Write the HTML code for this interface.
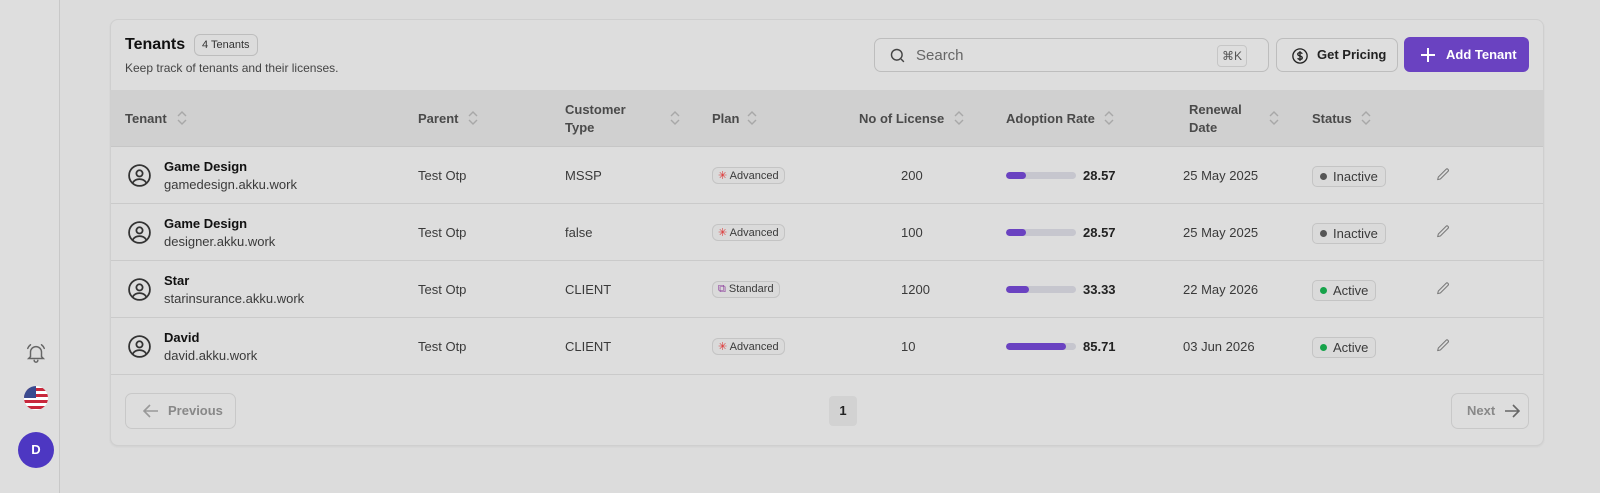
<!DOCTYPE html>
<html><head><meta charset="utf-8"><style>
*{box-sizing:border-box;margin:0;padding:0}
body{width:1600px;height:493px;background:#dcdcdc;font-family:"Liberation Sans",sans-serif;position:relative;overflow:hidden;color:#1f1f1f}
.a{position:absolute}
.side{left:0;top:0;width:60px;height:493px;border-right:1px solid #c8c8c8;background:#dedede}
.card{left:110px;top:19px;width:1434px;height:427px;border:1px solid #cfcfcf;border-radius:8px;background:#dddddd;overflow:hidden;box-shadow:0 1px 2px rgba(0,0,0,.06)}
.th{top:70px;left:0;width:1434px;height:57px;background:#d0d0d0;border-bottom:1px solid #c6c6c6}
.hl{font-size:13px;font-weight:bold;color:#4a4a4a;line-height:18px}
.row{left:0;width:1434px;height:57px;border-bottom:1px solid #cacaca}
.t{font-size:13px;color:#3a3a3a}
.pill{border:1px solid #c4c4c4;border-radius:6px;font-size:11px;color:#3a3a3a;padding:1px 5px;background:#dadada}
.bar{width:70px;height:7px;border-radius:4px;background:#c6c6ce;overflow:hidden}
.bar i{display:block;height:7px;background:#6a42c1;border-radius:4px}
.st{border:1px solid #c4c4c4;border-radius:5px;font-size:13px;color:#3a3a3a;padding:2px 7px;background:#dadada}
.dot{display:inline-block;width:7px;height:7px;border-radius:50%;margin-right:6px;vertical-align:1px}
.so{position:absolute;width:10px;height:16px}
</style></head><body>
<svg width="0" height="0" style="position:absolute"><defs><symbol id="s" viewBox="0 0 10 16"><path d="M1 6l4-4 4 4M1 10l4 4 4-4" fill="none" stroke="#a8a8a8" stroke-width="1.4"/></symbol><symbol id="p" viewBox="0 0 24 24"><path d="M16.5 3.5a2.1 2.1 0 013 3L8 18l-4 1 1-4z" fill="none" stroke="#7a7a7a" stroke-width="1.6" stroke-linejoin="round"/></symbol><symbol id="u" viewBox="0 0 24 24"><g fill="none" stroke="#333" stroke-width="1.7"><circle cx="12" cy="12" r="10"/><circle cx="12" cy="10" r="3"/><path d="M5.5 19c1.5-2.5 3.8-3.5 6.5-3.5s5 1 6.5 3.5"/></g></symbol></defs></svg>
<div class="a side">
<svg class="a" style="left:25px;top:342px" width="22" height="22" viewBox="0 0 24 24" fill="none" stroke="#666" stroke-width="1.6" stroke-linecap="round"><path d="M6 16V11a6 6 0 0112 0v5l2 2H4z"/><path d="M10 20a2 2 0 004 0"/><path d="M3 7a9 9 0 013-4M21 7a9 9 0 00-3-4"/></svg>
<svg class="a" style="left:24px;top:386px" width="24" height="24" viewBox="0 0 24 24"><defs><clipPath id="c"><circle cx="12" cy="12" r="12"/></clipPath></defs><g clip-path="url(#c)"><rect width="24" height="24" fill="#fff"/><rect y="2" width="24" height="3" fill="#c8283c"/><rect y="8" width="24" height="3" fill="#c8283c"/><rect y="14" width="24" height="3" fill="#c8283c"/><rect y="20" width="24" height="3" fill="#c8283c"/><rect width="12" height="12" fill="#3a4a8f"/></g></svg>
<div class="a" style="left:18px;top:432px;width:36px;height:36px;border-radius:50%;background:#4d37c2;color:#fff;font-size:13px;font-weight:bold;text-align:center;line-height:36px">D</div>
</div>
<div class="a card">
<div class="a" style="left:14px;top:16px;font-size:16px;font-weight:bold;color:#111">Tenants</div>
<div class="a" style="left:83px;top:14px;border:1px solid #bdbdbd;border-radius:6px;font-size:11px;padding:4px 7px;color:#333;background:#dcdcdc">4 Tenants</div>
<div class="a" style="left:14px;top:41px;font-size:12px;color:#444">Keep track of tenants and their licenses.</div>
<div class="a" style="left:763px;top:18px;width:395px;height:34px;border:1px solid #bdbdbd;border-radius:7px;background:#dedede">
<svg class="a" style="left:14px;top:8px" width="17" height="17" viewBox="0 0 24 24" fill="none" stroke="#444" stroke-width="2"><circle cx="11" cy="11" r="7.5"/><path d="M17 17l4 4"/></svg>
<div class="a" style="left:41px;top:8px;font-size:15px;color:#666">Search</div>
<div class="a" style="left:342px;top:6px;border:1px solid #c6c6c6;border-radius:4px;font-size:12px;color:#555;padding:3px 4px">⌘K</div>
</div>
<div class="a" style="left:1165px;top:18px;width:122px;height:34px;border:1px solid #bdbdbd;border-radius:7px;background:#dedede;font-size:13px;font-weight:bold;color:#222;line-height:32px;padding-left:40px">Get Pricing
<svg class="a" style="left:14px;top:8px" width="18" height="18" viewBox="0 0 24 24" fill="none" stroke="#222" stroke-width="1.8"><circle cx="12" cy="12" r="9.5"/><path d="M15 9c-.5-1-1.6-1.5-3-1.5-1.8 0-3 .8-3 2.2 0 3 6 1.6 6 4.6 0 1.4-1.2 2.2-3 2.2-1.5 0-2.6-.6-3-1.6M12 5.5v13"/></svg></div>
<div class="a" style="left:1293px;top:17px;width:125px;height:35px;border-radius:6px;background:#6a42c1;color:#fff;font-size:13px;font-weight:bold;line-height:35px;padding-left:42px">Add Tenant
<svg class="a" style="left:17px;top:11px" width="14" height="14" viewBox="0 0 14 14" stroke="#fff" stroke-width="2"><path d="M7 0v14M0 7h14"/></svg></div>
<div class="a th"></div>
<div class="a hl" style="left:14px;top:90px">Tenant</div><svg class="so" style="left:66px;top:90px"><use href="#s"/></svg>
<div class="a hl" style="left:307px;top:90px">Parent</div><svg class="so" style="left:357px;top:90px"><use href="#s"/></svg>
<div class="a hl" style="left:454px;top:81px">Customer<br>Type</div><svg class="so" style="left:559px;top:90px"><use href="#s"/></svg>
<div class="a hl" style="left:601px;top:90px">Plan</div><svg class="so" style="left:636px;top:90px"><use href="#s"/></svg>
<div class="a hl" style="left:748px;top:90px">No of License</div><svg class="so" style="left:843px;top:90px"><use href="#s"/></svg>
<div class="a hl" style="left:895px;top:90px">Adoption Rate</div><svg class="so" style="left:993px;top:90px"><use href="#s"/></svg>
<div class="a hl" style="left:1078px;top:81px">Renewal<br>Date</div><svg class="so" style="left:1158px;top:90px"><use href="#s"/></svg>
<div class="a hl" style="left:1201px;top:90px">Status</div><svg class="so" style="left:1250px;top:90px"><use href="#s"/></svg>

<div class="a row" style="top:127px"></div><div class="a row" style="top:184px"></div><div class="a row" style="top:241px"></div><div class="a row" style="top:298px"></div>

<div class="a" style="left:0;top:127px;width:1434px;height:57px">
<svg class="a" style="left:16px;top:16px" width="25" height="25"><use href="#u"/></svg>
<div class="a" style="left:53px;top:12px;font-size:13px;font-weight:bold;color:#111">Game Design</div>
<div class="a t" style="left:53px;top:30px">gamedesign.akku.work</div>
<div class="a t" style="left:307px;top:21px">Test Otp</div><div class="a t" style="left:454px;top:21px">MSSP</div>
<div class="a pill" style="left:601px;top:20px"><span style="color:#d33">✳</span> Advanced</div>
<div class="a t" style="left:790px;top:21px">200</div>
<div class="a bar" style="left:895px;top:25px"><i style="width:20px"></i></div>
<div class="a t" style="left:972px;top:21px;font-weight:bold;color:#222">28.57</div>
<div class="a t" style="left:1072px;top:21px">25 May 2025</div>
<div class="a st" style="left:1201px;top:19px"><span class="dot" style="background:#555"></span>Inactive</div>
<svg class="a" style="left:1324px;top:20px" width="16" height="16"><use href="#p"/></svg>
</div>
<div class="a" style="left:0;top:184px;width:1434px;height:57px">
<svg class="a" style="left:16px;top:16px" width="25" height="25"><use href="#u"/></svg>
<div class="a" style="left:53px;top:12px;font-size:13px;font-weight:bold;color:#111">Game Design</div>
<div class="a t" style="left:53px;top:30px">designer.akku.work</div>
<div class="a t" style="left:307px;top:21px">Test Otp</div><div class="a t" style="left:454px;top:21px">false</div>
<div class="a pill" style="left:601px;top:20px"><span style="color:#d33">✳</span> Advanced</div>
<div class="a t" style="left:790px;top:21px">100</div>
<div class="a bar" style="left:895px;top:25px"><i style="width:20px"></i></div>
<div class="a t" style="left:972px;top:21px;font-weight:bold;color:#222">28.57</div>
<div class="a t" style="left:1072px;top:21px">25 May 2025</div>
<div class="a st" style="left:1201px;top:19px"><span class="dot" style="background:#555"></span>Inactive</div>
<svg class="a" style="left:1324px;top:20px" width="16" height="16"><use href="#p"/></svg>
</div>
<div class="a" style="left:0;top:241px;width:1434px;height:57px">
<svg class="a" style="left:16px;top:16px" width="25" height="25"><use href="#u"/></svg>
<div class="a" style="left:53px;top:12px;font-size:13px;font-weight:bold;color:#111">Star</div>
<div class="a t" style="left:53px;top:30px">starinsurance.akku.work</div>
<div class="a t" style="left:307px;top:21px">Test Otp</div><div class="a t" style="left:454px;top:21px">CLIENT</div>
<div class="a pill" style="left:601px;top:20px"><span style="color:#8a3a9a">⧉</span> Standard</div>
<div class="a t" style="left:790px;top:21px">1200</div>
<div class="a bar" style="left:895px;top:25px"><i style="width:23px"></i></div>
<div class="a t" style="left:972px;top:21px;font-weight:bold;color:#222">33.33</div>
<div class="a t" style="left:1072px;top:21px">22 May 2026</div>
<div class="a st" style="left:1201px;top:19px"><span class="dot" style="background:#16a34a"></span>Active</div>
<svg class="a" style="left:1324px;top:20px" width="16" height="16"><use href="#p"/></svg>
</div>
<div class="a" style="left:0;top:298px;width:1434px;height:57px">
<svg class="a" style="left:16px;top:16px" width="25" height="25"><use href="#u"/></svg>
<div class="a" style="left:53px;top:12px;font-size:13px;font-weight:bold;color:#111">David</div>
<div class="a t" style="left:53px;top:30px">david.akku.work</div>
<div class="a t" style="left:307px;top:21px">Test Otp</div><div class="a t" style="left:454px;top:21px">CLIENT</div>
<div class="a pill" style="left:601px;top:20px"><span style="color:#d33">✳</span> Advanced</div>
<div class="a t" style="left:790px;top:21px">10</div>
<div class="a bar" style="left:895px;top:25px"><i style="width:60px"></i></div>
<div class="a t" style="left:972px;top:21px;font-weight:bold;color:#222">85.71</div>
<div class="a t" style="left:1072px;top:21px">03 Jun 2026</div>
<div class="a st" style="left:1201px;top:19px"><span class="dot" style="background:#16a34a"></span>Active</div>
<svg class="a" style="left:1324px;top:20px" width="16" height="16"><use href="#p"/></svg>
</div>

<div class="a" style="left:14px;top:373px;width:111px;height:36px;border:1px solid #c8c8c8;border-radius:7px;font-size:13px;font-weight:bold;color:#888;line-height:34px;padding-left:42px">Previous
<svg class="a" style="left:17px;top:10px" width="16" height="14" viewBox="0 0 16 14" fill="none" stroke="#999" stroke-width="1.6"><path d="M15 7H1M7 1L1 7l6 6"/></svg></div>
<div class="a" style="left:718px;top:376px;width:28px;height:30px;background:#d2d2d2;border-radius:4px;font-size:13px;font-weight:bold;text-align:center;line-height:30px;color:#222">1</div>
<div class="a" style="left:1340px;top:373px;width:78px;height:36px;border:1px solid #c8c8c8;border-radius:7px;font-size:13px;font-weight:bold;color:#888;line-height:34px;padding-left:15px">Next
<svg class="a" style="left:52px;top:10px" width="16" height="14" viewBox="0 0 16 14" fill="none" stroke="#666" stroke-width="1.6"><path d="M1 7h14M9 1l6 6-6 6"/></svg></div>
</div>
</body></html>
